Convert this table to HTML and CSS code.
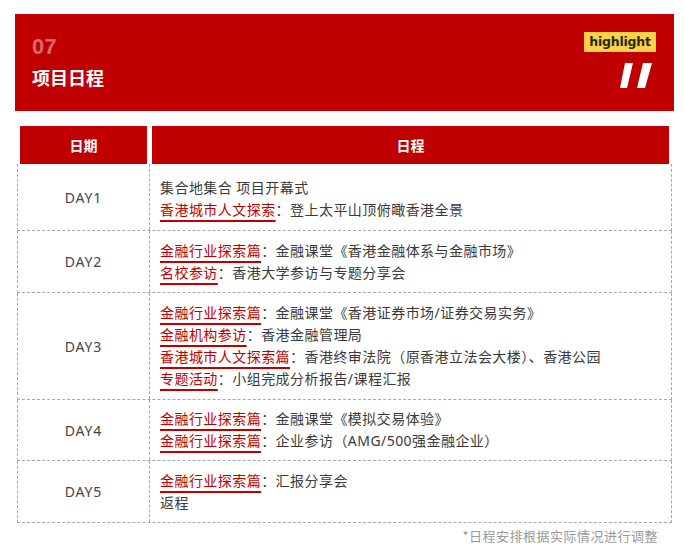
FILE: index.html
```html
<!DOCTYPE html>
<html lang="zh-CN">
<head>
<meta charset="utf-8">
<link rel="stylesheet" href="styles.css">
</head>
<body>
<div class="page">
  <section class="banner">
    <div class="banner-text">
      <div class="num">07</div>
      <div class="title">项目日程</div>
    </div>
    <div class="banner-side">
      <span class="badge">highlight</span>
      <svg class="slashes" width="34" height="25" viewBox="0 0 34 25">
        <polygon points="5,0 13,0 7,25 0,25" fill="#fff"/>
        <polygon points="23,0 32,0 25,25 17,25" fill="#fff"/>
      </svg>
    </div>
  </section>

  <div class="table">
    <div class="thead">
      <div class="th">日期</div>
      <div class="th">日程</div>
    </div>
    <div class="row r1">
      <div class="day">DAY1</div>
      <div class="items">
        <p>集合地集合 项目开幕式</p>
        <p><span class="tag">香港城市人文探索</span>：登上太平山顶俯瞰香港全景</p>
      </div>
    </div>
    <div class="row">
      <div class="day">DAY2</div>
      <div class="items">
        <p><span class="tag">金融行业探索篇</span>：金融课堂《香港金融体系与金融市场》</p>
        <p><span class="tag">名校参访</span>：香港大学参访与专题分享会</p>
      </div>
    </div>
    <div class="row r3">
      <div class="day">DAY3</div>
      <div class="items">
        <p><span class="tag">金融行业探索篇</span>：金融课堂《香港证券市场/证券交易实务》</p>
        <p><span class="tag">金融机构参访</span>：香港金融管理局</p>
        <p><span class="tag">香港城市人文探索篇</span>：香港终审法院（原香港立法会大楼）、香港公园</p>
        <p><span class="tag">专题活动</span>：小组完成分析报告/课程汇报</p>
      </div>
    </div>
    <div class="row r4">
      <div class="day">DAY4</div>
      <div class="items">
        <p><span class="tag">金融行业探索篇</span>：金融课堂《模拟交易体验》</p>
        <p><span class="tag">金融行业探索篇</span>：企业参访（AMG/500强金融企业）</p>
      </div>
    </div>
    <div class="row">
      <div class="day">DAY5</div>
      <div class="items">
        <p><span class="tag">金融行业探索篇</span>：汇报分享会</p>
        <p>返程</p>
      </div>
    </div>
  </div>
  <p class="note">*日程安排根据实际情况进行调整</p>
</div>
</body>
</html>
```

FILE: styles.css
```css
* { box-sizing: border-box; }
html, body { margin: 0; padding: 0; background: #fff; }
body {
  font-family: "Noto Sans CJK SC", "Noto Sans", sans-serif;
  color: #333;
}
.page { width: 684px; padding-top: 14px; }

.banner {
  margin-left: 15px;
  width: 659px;
  height: 97px;
  background: #c00000;
  display: flex;
  justify-content: space-between;
  padding: 0 17px 0 17px;
}
.banner-text { padding-top: 20px; }
.num {
  font-family: "Liberation Sans", Arial, sans-serif;
  font-weight: bold;
  font-size: 22px;
  line-height: 26px;
  color: rgba(255, 255, 255, 0.42);
}
.title {
  font-weight: bold;
  font-size: 18px;
  line-height: 24px;
  color: #fff;
  margin-top: 5px;
}
.banner-side {
  display: flex;
  flex-direction: column;
  align-items: flex-end;
  padding-top: 18px;
  margin-right: 1px;
}
.badge {
  display: block;
  background: #ffd146;
  color: #1e2a1e;
  font-family: "DejaVu Sans", sans-serif;
  font-weight: bold;
  font-size: 12.5px;
  line-height: 20px;
  height: 20px;
  width: 72px;
  text-align: center;
  letter-spacing: -0.2px;
}
.slashes { display: block; margin-top: 11px; margin-right: 2px; }

.table {
  margin: 15px 0 0 17px;
  width: 655px;
}
.thead {
  display: grid;
  grid-template-columns: 127px 517px;
  column-gap: 5px;
  padding: 0 2px 0 3px;
}
.th {
  background: #c00000;
  color: #fff;
  font-weight: bold;
  font-size: 14px;
  height: 38px;
  line-height: 38px;
  text-align: center;
}
.row {
  display: grid;
  grid-template-columns: 132px 1fr;
  border-left: 1px dashed #a8a8a8;
  border-right: 1px dashed #a8a8a8;
  border-bottom: 1px dashed #a8a8a8;
}
.day {
  border-right: 1px dashed #a8a8a8;
  display: flex;
  align-items: center;
  justify-content: center;
  font-family: "Noto Sans", "Noto Sans CJK SC", sans-serif;
  font-size: 14px;
  color: #444;
  letter-spacing: 0.9px;
}
.items {
  padding: 9px 0 8px 10px;
  font-family: "Noto Sans", "Noto Sans CJK SC", sans-serif;
  font-size: 14px;
  color: #3a3a3a;
  letter-spacing: 0.45px;
}
.r1 .items { padding: 13px 0 9px 10px; }
.r3 .items { padding: 9px 0 9px 10px; }
.r4 .items { padding: 8px 0 8px 10px; }
.items p { margin: 0; line-height: 22px; white-space: nowrap; }
.tag {
  color: #c00000;
  text-decoration: underline;
  text-decoration-color: #c00000;
  text-decoration-thickness: 1.5px;
  text-underline-offset: 5px;
}
.note {
  margin: 3px 0 0 0;
  width: 658px;
  text-align: right;
  font-size: 13px;
  line-height: 20px;
  color: #999;
  letter-spacing: 0.5px;
}
```
